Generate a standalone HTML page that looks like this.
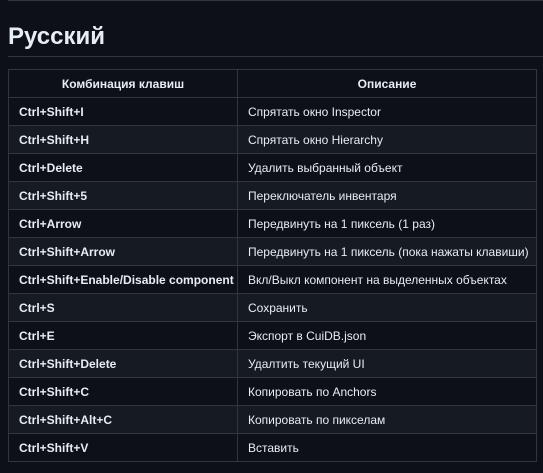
<!DOCTYPE html><html><head><style>
body{margin:0;background:#0d1117;width:543px;height:473px;overflow:hidden;font-family:"Liberation Sans",sans-serif;color:#e6edf3}
.top{position:absolute;left:8px;right:0;top:0;height:1px;background:#30363d}
h2{position:absolute;left:8px;top:21px;margin:0;font-size:24px;font-weight:600;color:#e6edf3;line-height:32px}
.hr{position:absolute;left:8px;right:0;top:56px;height:1px;background:#30363d}
table{position:absolute;left:8px;top:69px;border-collapse:collapse;font-size:12px;width:528px;table-layout:fixed}
td,th{border:1px solid #30363d;height:27px;padding:0 0 0 10px;white-space:nowrap;overflow:hidden}
th{font-weight:bold;text-align:center;padding:0}
td:first-child{font-weight:bold}
tr:nth-child(2n+1) td{background:#161b22}
</style></head><body>
<div class="top"></div><h2>Русский</h2><div class="hr"></div>
<table>
<colgroup><col style="width:229px"><col style="width:299px"></colgroup>
<tr><th>Комбинация клавиш</th><th>Описание</th></tr>
<tr><td>Ctrl+Shift+I</td><td>Спрятать окно Inspector</td></tr>
<tr><td>Ctrl+Shift+H</td><td>Спрятать окно Hierarchy</td></tr>
<tr><td>Ctrl+Delete</td><td>Удалить выбранный объект</td></tr>
<tr><td>Ctrl+Shift+5</td><td>Переключатель инвентаря</td></tr>
<tr><td>Ctrl+Arrow</td><td>Передвинуть на 1 пиксель (1 раз)</td></tr>
<tr><td>Ctrl+Shift+Arrow</td><td>Передвинуть на 1 пиксель (пока нажаты клавиши)</td></tr>
<tr><td>Ctrl+Shift+Enable/Disable component</td><td>Вкл/Выкл компонент на выделенных объектах</td></tr>
<tr><td>Ctrl+S</td><td>Сохранить</td></tr>
<tr><td>Ctrl+E</td><td>Экспорт в CuiDB.json</td></tr>
<tr><td>Ctrl+Shift+Delete</td><td>Удалтить текущий UI</td></tr>
<tr><td>Ctrl+Shift+C</td><td>Копировать по Anchors</td></tr>
<tr><td>Ctrl+Shift+Alt+C</td><td>Копировать по пикселам</td></tr>
<tr><td>Ctrl+Shift+V</td><td>Вставить</td></tr>
</table>
</body></html>
